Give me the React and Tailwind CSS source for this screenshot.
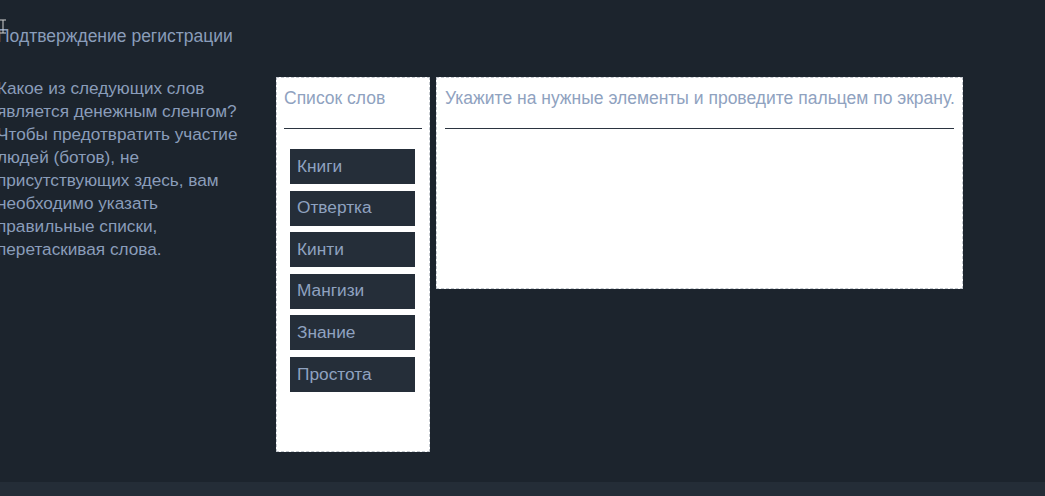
const WORDS = ["Книги", "Отвертка", "Кинти", "Мангизи", "Знание", "Простота"]

function App() {
    return (
        <div className="flex h-[496px] w-[1045px] flex-col overflow-hidden bg-[#1c242d] font-['Liberation_Sans',Arial,sans-serif] text-[#8a9dba]">
            <div className="flex-1">
                <div className="relative -ml-[3px] pt-[26px] text-[17.5px] leading-[20px]">
                    <svg className="absolute left-[2px] top-[19px]" width="8" height="15" viewBox="0 0 8 15">
                        <path d="M1 1h6M4 1v13M1 14h6" stroke="#d0d0d0" strokeWidth="1" fill="none" />
                    </svg>
                    Подтверждение регистрации
                </div>

                <div className="mt-[31px] flex items-start">
                    <p className="-ml-[3px] w-[250px] text-[17.2px] leading-[23px]">
                        Какое из следующих слов является денежным сленгом? Чтобы предотвратить участие людей (ботов), не присутствующих здесь, вам необходимо указать правильные списки, перетаскивая слова.
                    </p>

                    <div className="ml-[29px] flex h-[375px] w-[154px] flex-col border border-dashed border-[#c3c8ce] bg-white px-[7px]">
                        <div className="pt-[10px] pb-[20px] text-[17.5px] leading-[20px] text-[#8fa2c0]">Список слов</div>
                        <div className="h-px bg-[#2b3440]" />
                        <div className="mt-[20px] flex flex-col gap-[6.6px] pl-[6px] pr-[7px]">
                            {WORDS.map(w => (
                                <div key={w} className="flex h-[35px] items-center bg-[#252e39] px-[7px] text-[17.3px] text-[#8fa2c0]">
                                    {w}
                                </div>
                            ))}
                        </div>
                    </div>

                    <div className="ml-[6px] flex h-[212px] w-[527px] flex-col border border-dashed border-[#c3c8ce] bg-white px-[8px]">
                        <div className="pt-[10px] pb-[20px] text-[17.5px] leading-[20px] whitespace-nowrap text-[#8fa2c0]">
                            Укажите на нужные элементы и проведите пальцем по экрану.
                        </div>
                        <div className="h-px bg-[#2b3440]" />
                    </div>
                </div>
            </div>
            <div className="h-[14px] bg-[#242d37]" />
        </div>
    )
}

export default App
